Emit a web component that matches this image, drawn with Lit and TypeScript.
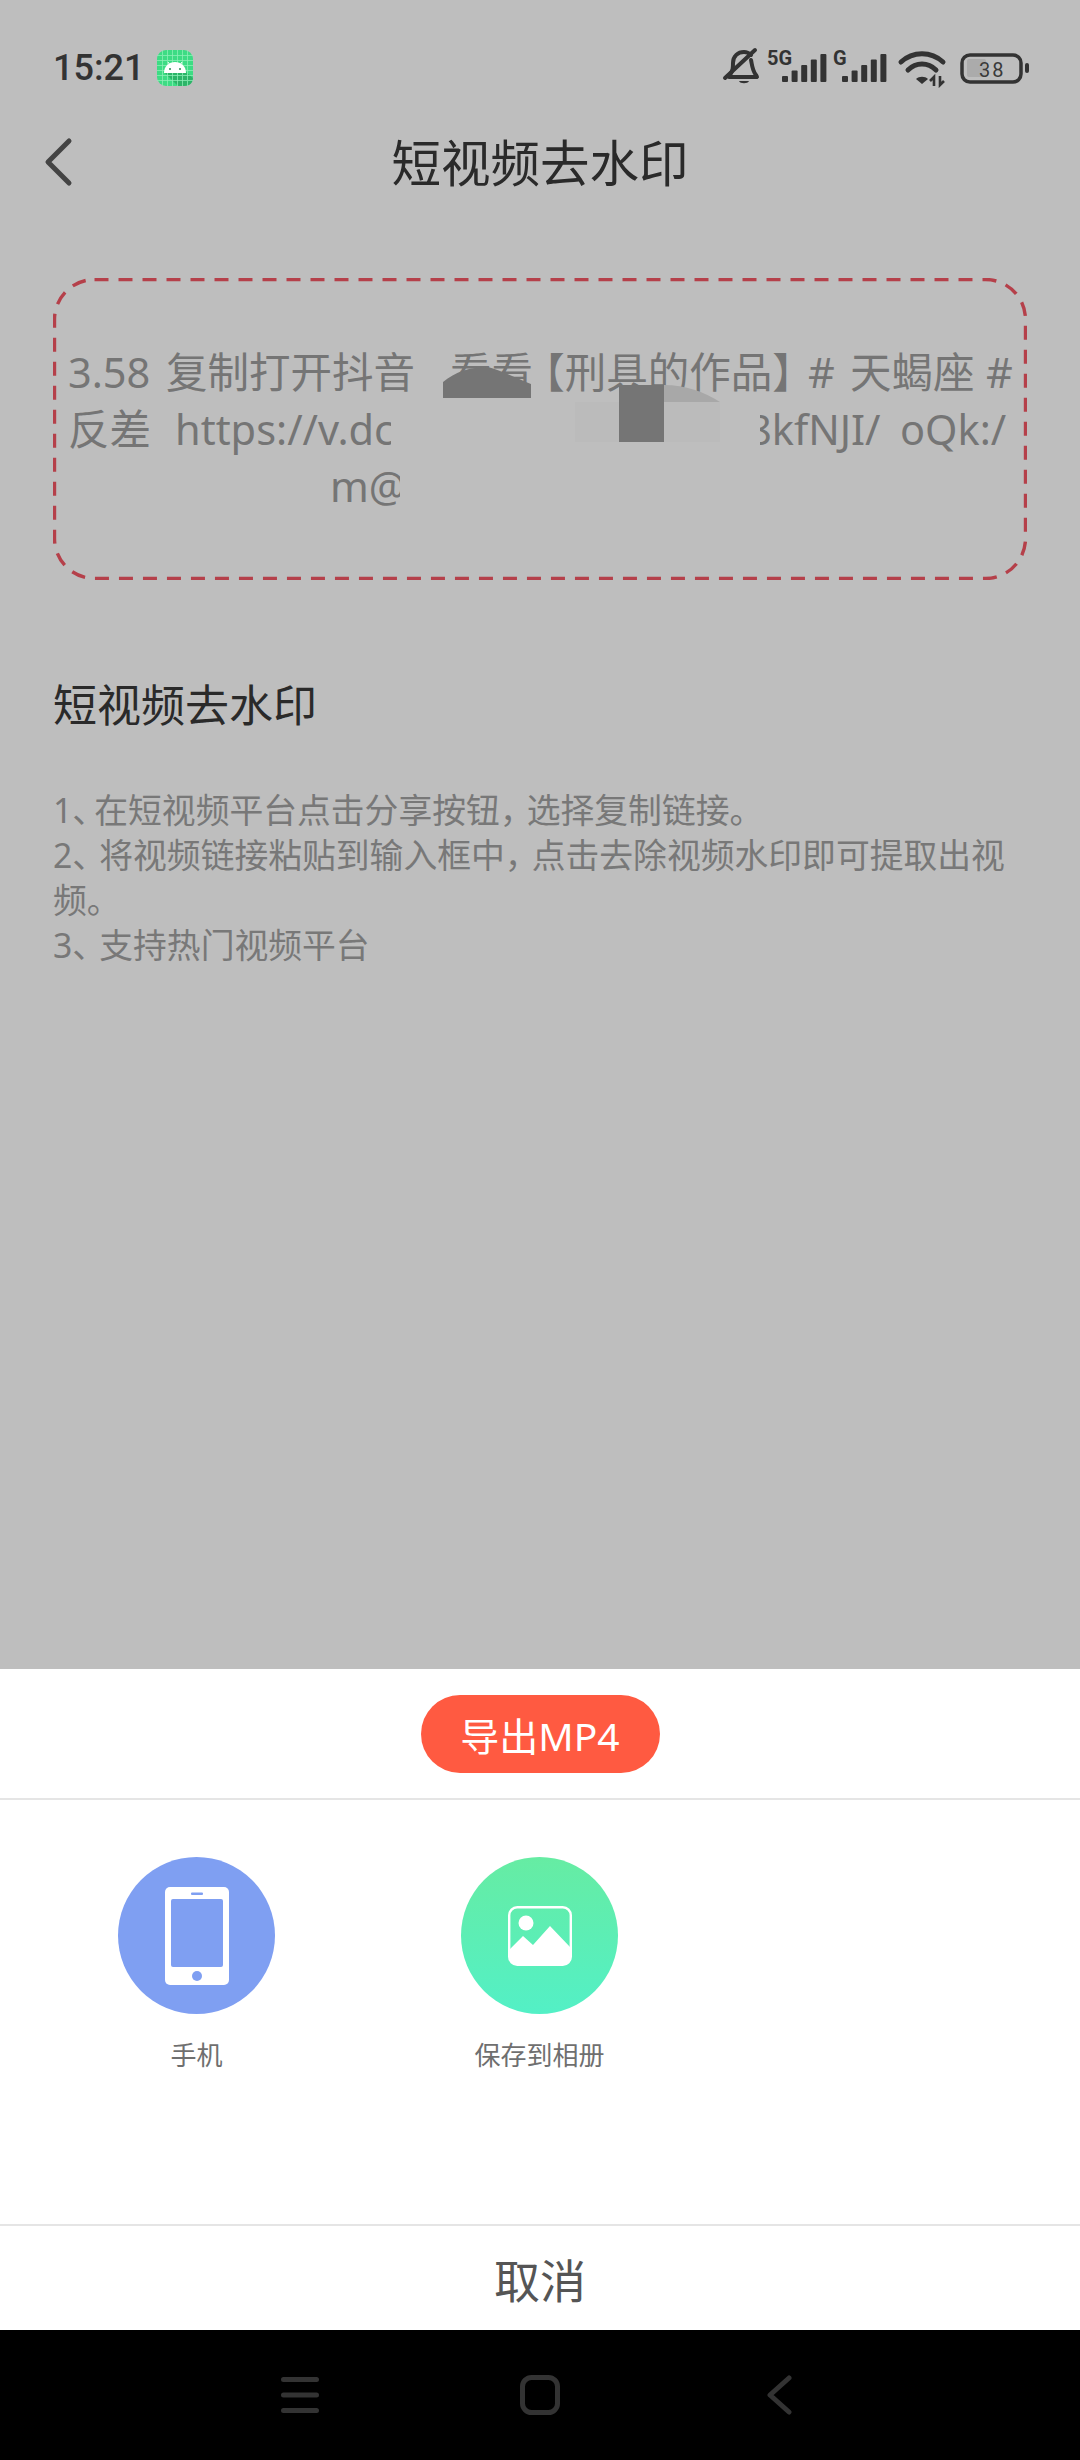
import { LitElement, html, css, svg } from 'lit';
import { customElement } from 'lit/decorators.js';

const gridLines = [4, 9, 14, 19, 24, 29];

// pasted text: [text, left edge on the page]; the last entry of a row only marks its end
const pasteRows: [string, number][][] = [
    [['3.58', 68], ['复制打开抖音', 166], ['看看', 450], ['【刑具的作品】', 544], ['#', 808], ['天蝎座', 850], ['#', 986], ['', 1013]],
    [['反差', 68], ['https://v.dc', 175], ['8kfNJI/', 748], ['oQk:/', 900], ['', 1013]],
    [['m@', 330], ['', 420]],
];

@customElement('status-icons')
class StatusIcons extends LitElement {
    static styles = css`
    :host { display: block; width: 310px; height: 40px; }
    svg { display: block; margin-top: -6px; }
    text { font-family: "Roboto", sans-serif; font-weight: 700; fill: #333; }
    .batt { font-weight: 400; fill: #3a3a3a; }
    `;

    bars(x: number) {
        return [0, 1, 2, 3, 4].map((i) => {
            const h = 6 + i * 5.5;
            return svg`<rect x=${x + i * 9.6} y=${34 - h} width="6" height=${h} rx="1" fill="#333"/>`;
        });
    }

    render() {
        // viewBox starts at the bell's left edge, x=720 in the page
        return html`<svg width="310" height="46" viewBox="0 -6 310 46">
            <g fill="none" stroke="#333" stroke-width="4" stroke-linecap="round" stroke-linejoin="round">
                <path d="M10 27 C13 22 13 20 13 15 C13 8 18 4 24 4 C27 4 29 5 31 7"/>
                <path d="M31 12 C32 16 32 22 36 27 L37 29 L9 29"/>
                <path d="M5 30 L35 2"/>
            </g>
            <path d="M19 33 H29 C28 36 20 36 19 33 Z" fill="#333"/>
            <text x="47" y="17" font-size="20">5G</text>
            ${this.bars(62)}
            <text x="113" y="17" font-size="20">G</text>
            ${this.bars(122)}
            <g fill="none" stroke="#333" stroke-width="5" stroke-linecap="round">
                <path d="M181 14 C193 3 211 3 223 14"/>
                <path d="M188 22 C196 14 208 14 216 22"/>
            </g>
            <path d="M196 31 C199 28 205 28 208 31 L202 36 Z" fill="#333"/>
            <path d="M214 38 V29 L210 33 M220 28 V37 L224 33" fill="none" stroke="#333" stroke-width="2.6"/>
            <rect x="242" y="7" width="59" height="27" rx="8" fill="none" stroke="#333" stroke-width="3.5"/>
            <rect x="247" y="11" width="19" height="18" rx="2" fill="#ababab"/>
            <rect x="305" y="15" width="4" height="10" rx="2" fill="#333"/>
            <text class="batt" x="259" y="29" font-size="20" letter-spacing="2">38</text>
        </svg>`;
    }
}

@customElement('app-root')
class AppRoot extends LitElement {
    static styles = css`
    :host {
        display: block;
        width: 1080px;
        height: 2460px;
        font-family: "Noto Sans", "Noto Sans CJK SC", sans-serif;
        background: #bebebe;
        overflow: hidden;
    }
    .page { display: flex; flex-direction: column; height: 2460px; }
    .dim { height: 1669px; background: #bebebe; flex: none; }

    .status {
        height: 97px;
        padding: 38px 0 0 53px;
        box-sizing: border-box;
        display: flex;
        align-items: center;
    }
    .time { font-family: "Roboto", sans-serif; font-size: 36px; font-weight: 500; color: #333; width: 104px; }
    .status status-icons { margin-left: auto; margin-right: 50px; }

    .header { height: 130px; display: flex; align-items: center; position: relative; }
    .back { margin-left: 44px; flex: none; }
    .title {
        position: absolute;
        left: 0;
        right: 0;
        padding-bottom: 2px;
        text-align: center;
        font-size: 49.5px;
        color: #2a2a2a;
    }

    .box {
        margin: 51px 53px 0 53px;
        height: 302px;
        box-sizing: border-box;
        position: relative;
        display: flex;
        flex-direction: column;
        justify-content: center;
        font-size: 41.5px;
        line-height: 57px;
        color: #757575;
    }
    .frame { position: absolute; left: 0; top: 0; }
    .line { display: flex; white-space: pre; padding-left: 15px; height: 57px; font-feature-settings: "halt"; }
    .line.mail { padding-left: 277px; }
    .line span { flex: none; }
    .patches { position: absolute; left: -53px; top: -278px; }

    .howto { margin: 95px 53px 0 53px; }
    .howto h2 { margin: 0; font-size: 44px; font-weight: 400; color: #2a2a2a; line-height: 60px; }
    .howto p { margin: 53px 0 0 0; font-size: 33.8px; line-height: 45px; color: #787878; }
    .tight { font-feature-settings: "halt"; letter-spacing: 5px; }
    .half { font-feature-settings: "halt"; letter-spacing: 10px; }

    .sheet { flex: 1; background: #fff; display: flex; flex-direction: column; }
    .export {
        height: 131px;
        flex: none;
        display: flex;
        align-items: center;
        justify-content: center;
        border-bottom: 2px solid #e5e5e5;
        box-sizing: border-box;
    }
    .pill {
        width: 239px;
        height: 78px;
        border-radius: 39px;
        background: #ff5a41;
        color: #fff;
        font-size: 39px;
        display: flex;
        align-items: center;
        justify-content: center;
    }
    .targets {
        height: 424px;
        flex: none;
        display: grid;
        grid-template-columns: repeat(3, 343px);
        padding: 57px 0 0 25px;
        box-sizing: border-box;
    }
    .target { display: flex; flex-direction: column; align-items: center; }
    .circle {
        width: 157px;
        height: 157px;
        border-radius: 50%;
        display: flex;
        align-items: center;
        justify-content: center;
    }
    .phone { background: #7f9ff2; }
    .album { background: linear-gradient(180deg, #66eca3, #53f0c6); }
    .target span { margin-top: 23px; font-size: 26px; line-height: 36px; color: #6f6f6f; }

    .cancel {
        height: 106px;
        flex: none;
        border-top: 2px solid #e5e5e5;
        box-sizing: border-box;
        display: flex;
        align-items: center;
        justify-content: center;
        font-size: 46px;
        color: #555;
    }

    .nav {
        height: 130px;
        flex: none;
        background: #000;
        display: grid;
        grid-template-columns: 300px 240px 1fr;
    }
    .nav svg { display: block; }
    .nav-menu { margin: 47px 0 0 281px; }
    .nav-home { margin: 45px 0 0 220px; }
    .nav-back { margin: 45px 0 0 226px; }
    `;

    renderRow(row: [string, number][], cls: string) {
        return html`<div class="line ${cls}">
            ${row.slice(0, -1).map(([text, x], i) => html`<span style="width: ${row[i + 1][1] - x}px">${text}</span>`)}
        </div>`;
    }

    render() {
        return html`
        <div class="page">
            <div class="dim">
                <div class="status">
                    <span class="time">15:21</span>
                    <svg width="36" height="36" viewBox="0 0 36 36">
                        <rect width="36" height="36" rx="9" fill="#3ddc84"/>
                        <path d="M7 22 H29 L36 28 V27 C36 33 33 36 27 36 H21 Z" fill="#2cb468"/>
                        ${gridLines.map((p) => svg`
                            <path d="M${p + 1.5} 0 V36 M0 ${p + 1.5} H36" stroke="#8ff0b8" stroke-width="1" opacity="0.75"/>
                        `)}
                        <path d="M7 23 C7 16 12 12 18 12 C24 12 29 16 29 23 Z" fill="#fff"/>
                        <path d="M11 12 L13 15 M25 12 L23 15" stroke="#fff" stroke-width="1"/>
                        <circle cx="13" cy="19" r="1" fill="#2a8a55"/>
                        <circle cx="23" cy="19" r="1" fill="#2a8a55"/>
                    </svg>
                    <status-icons></status-icons>
                </div>

                <div class="header">
                    <svg class="back" width="30" height="50" viewBox="0 0 30 50">
                        <path d="M25 4 L4 25 L25 46" fill="none" stroke="#444" stroke-width="5" stroke-linecap="round" stroke-linejoin="round"/>
                    </svg>
                    <div class="title">短视频去水印</div>
                </div>

                <div class="box">
                    <svg class="frame" width="974" height="302" viewBox="0 0 974 302">
                        <rect x="1.5" y="1.5" width="971" height="299" rx="40" fill="none" stroke="#b5404a" stroke-width="3.4" stroke-dasharray="14 10"/>
                    </svg>
                    ${this.renderRow(pasteRows[0], '')}
                    ${this.renderRow(pasteRows[1], '')}
                    ${this.renderRow(pasteRows[2], 'mail')}
                    <svg class="patches" width="1080" height="600" viewBox="0 0 1080 600">
                        <rect x="391" y="402" width="369" height="50" fill="#bebebe"/>
                        <rect x="400" y="462" width="40" height="50" fill="#bebebe"/>
                        <rect x="575" y="402" width="145" height="40" fill="#bbbbbb"/>
                        <path d="M443 398 V382 C455 372 470 367 488 367 C505 372 520 380 531 384 V398 Z" fill="#757575"/>
                        <path d="M664 385 C685 385 705 392 720 402 H664 Z" fill="#a8a8a8"/>
                        <rect x="619" y="385" width="45" height="57" fill="#757575"/>
                    </svg>
                </div>

                <div class="howto">
                    <h2>短视频去水印</h2>
                    <p>1<span class="tight">、</span>在短视频平台点击分享按钮<span class="half">，</span>选择复制链接。<br>2<span class="half">、</span>将视频链接粘贴到输入框中<span class="half">，</span>点击去除视频水印即可提取出视频。<br>3<span class="half">、</span>支持热门视频平台</p>
                </div>
            </div>

            <div class="sheet">
                <div class="export"><div class="pill">导出MP4</div></div>
                <div class="targets">
                    <div class="target">
                        <div class="circle phone">
                            <svg width="64" height="98" viewBox="0 0 64 98">
                                <rect width="64" height="98" rx="5" fill="#fff"/>
                                <rect x="6" y="12" width="52" height="68" rx="2" fill="#7f9ff2"/>
                                <rect x="26" y="5.5" width="12" height="2.5" rx="1" fill="#7f9ff2"/>
                                <circle cx="32" cy="89" r="5" fill="#7f9ff2"/>
                            </svg>
                        </div>
                        <span>手机</span>
                    </div>
                    <div class="target">
                        <div class="circle album">
                            <svg width="64" height="60" viewBox="0 0 64 60">
                                <rect x="1.2" y="1.2" width="61.6" height="57.6" rx="8" fill="none" stroke="#fff" stroke-width="2.4"/>
                                <path d="M2 43 L15 30 L25 39 L42 20 L62 41 V52 C62 56 59 59 55 59 H9 C5 59 2 56 2 52 Z" fill="#fff"/>
                                <circle cx="18" cy="17" r="7.5" fill="#fff"/>
                            </svg>
                        </div>
                        <span>保存到相册</span>
                    </div>
                </div>
                <div class="cancel">取消</div>
            </div>

            <div class="nav">
                <svg class="nav-menu" width="38" height="36" viewBox="0 0 38 36">
                    <path d="M2.5 2.5 H35.5 M2.5 18 H35.5 M2.5 33.5 H35.5" stroke="#333" stroke-width="5" stroke-linecap="round"/>
                </svg>
                <svg class="nav-home" width="40" height="40" viewBox="0 0 40 40">
                    <rect x="2.5" y="2.5" width="35" height="35" rx="9" fill="none" stroke="#333" stroke-width="5"/>
                </svg>
                <svg class="nav-back" width="26" height="40" viewBox="0 0 26 40">
                    <path d="M23 3 L4 20 L23 37" fill="none" stroke="#333" stroke-width="5" stroke-linecap="round" stroke-linejoin="round"/>
                </svg>
            </div>
        </div>
        `;
    }
}
